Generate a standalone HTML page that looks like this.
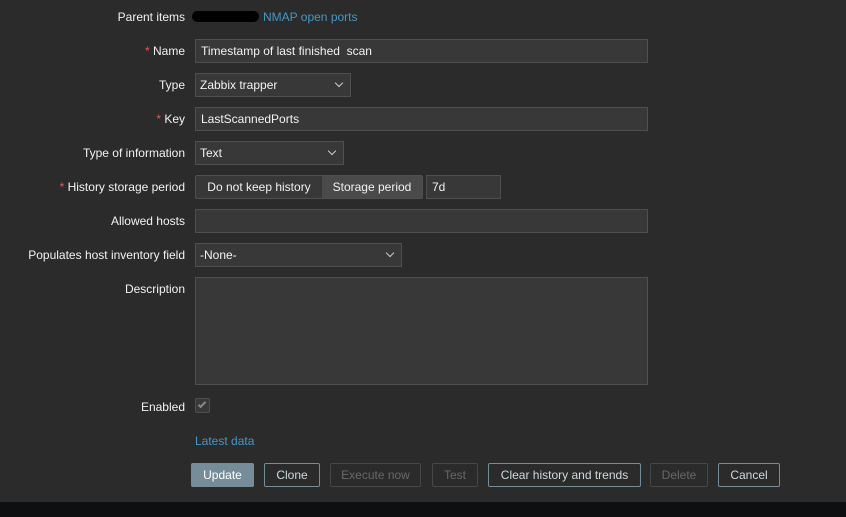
<!DOCTYPE html>
<html><head><style>
*{box-sizing:border-box;margin:0;padding:0}
body{width:846px;height:517px;background:#2b2b2b;font-family:"Liberation Sans",Arial,sans-serif;font-size:12px;color:#f2f2f2;position:relative;overflow:hidden}
.l{position:absolute;right:661px;text-align:right;white-space:nowrap}
.r{color:#e45959}
.in{position:absolute;height:24px;background:#383838;border:1px solid #4f4f4f;padding:0 5px;line-height:22px;white-space:nowrap}
.sel:after{content:"";position:absolute;right:8px;top:6px;width:5px;height:5px;border-right:1px solid #ccc;border-bottom:1px solid #ccc;transform:rotate(45deg)}
.b{position:absolute;top:463px;height:24px;border:1px solid #768d99;color:#cfd8dc;line-height:22px;text-align:center;border-radius:2px}
.d{border-color:#474747;color:#686868}
a{color:#4796c4;text-decoration:none}
</style></head><body>
<div class="l" style="top:10px">Parent items</div>
<div style="position:absolute;left:192px;top:11px;width:67px;height:11px;background:#000;border-radius:6px"></div>
<a style="position:absolute;left:263px;top:10px">NMAP open ports</a>
<div class="l" style="top:44px"><span class="r">*</span> Name</div>
<div class="in" style="left:195px;top:39px;width:453px">Timestamp of last finished&nbsp; scan</div>
<div class="l" style="top:78px">Type</div>
<div class="in sel" style="left:195px;top:73px;width:156px;padding-left:4px">Zabbix trapper</div>
<div class="l" style="top:112px"><span class="r">*</span> Key</div>
<div class="in" style="left:195px;top:107px;width:453px">LastScannedPorts</div>
<div class="l" style="top:146px">Type of information</div>
<div class="in sel" style="left:195px;top:141px;width:149px;padding-left:4px">Text</div>
<div class="l" style="top:180px"><span class="r">*</span> History storage period</div>
<div style="position:absolute;left:195px;top:175px;width:228px;height:24px;border:1px solid #4f4f4f;border-radius:2px;background:#383838;display:flex;line-height:22px">
<div style="width:126px;text-align:center">Do not keep history</div>
<div style="flex:1;background:#4a4a4a;text-align:center">Storage period</div></div>
<div class="in" style="left:426px;top:175px;width:75px">7d</div>
<div class="l" style="top:214px">Allowed hosts</div>
<div class="in" style="left:195px;top:209px;width:453px"></div>
<div class="l" style="top:248px">Populates host inventory field</div>
<div class="in sel" style="left:195px;top:243px;width:207px;padding-left:4px">-None-</div>
<div class="l" style="top:282px">Description</div>
<div class="in" style="left:195px;top:277px;width:453px;height:108px"></div>
<div class="l" style="top:400px">Enabled</div>
<div style="position:absolute;left:195px;top:398px;width:15px;height:15px;border:1px solid #4f4f4f;background:#383838;border-radius:2px"><div style="position:absolute;left:4px;top:1px;width:4px;height:8px;border-right:2px solid #888;border-bottom:2px solid #888;transform:rotate(45deg)"></div></div>
<a style="position:absolute;left:195px;top:434px">Latest data</a>
<div class="b" style="left:191px;width:63px;background:#768d99;color:#fff;border-color:#768d99">Update</div>
<div class="b" style="left:264px;width:56px">Clone</div>
<div class="b d" style="left:330px;width:91px">Execute now</div>
<div class="b d" style="left:432px;width:46px">Test</div>
<div class="b" style="left:488px;width:153px">Clear history and trends</div>
<div class="b d" style="left:650px;width:58px">Delete</div>
<div class="b" style="left:718px;width:62px">Cancel</div>
<div style="position:absolute;left:0;top:502px;width:846px;height:15px;background:#0e0f11"></div>
</body></html>
